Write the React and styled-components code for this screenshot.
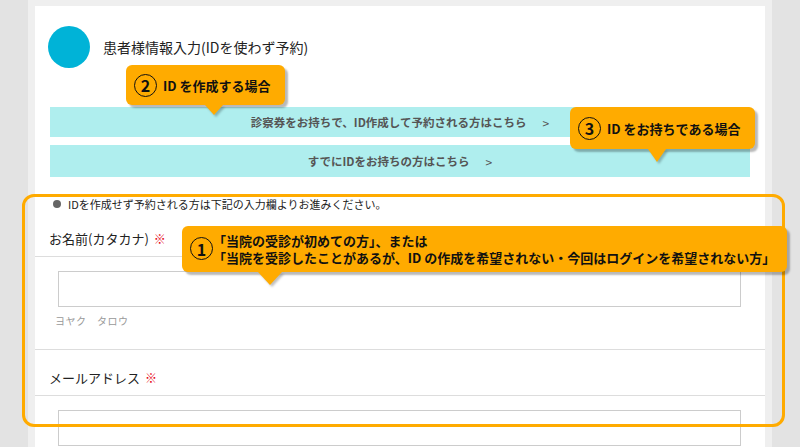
import styled, { createGlobalStyle } from "styled-components";

const GlobalStyle = createGlobalStyle`
  html, body {
    margin: 0;
    padding: 0;
    background: #e3e3e3;
    font-family: "Noto Sans CJK JP", "Noto Sans", sans-serif;
    color: #333;
    overflow: hidden;
  }
`;

const Page = styled.div`
  position: relative;
  margin: 0 28px;
  padding: 6px 7px 0;
  background: #efefef;
  height: 441px;
`;

const Panel = styled.div`
  background: #fff;
  height: 100%;
  padding-top: 20px;
  box-sizing: border-box;
  overflow: hidden;
`;

const Header = styled.div`
  display: flex;
  align-items: center;
  gap: 13px;
  padding-left: 13px;
`;

const Dot = styled.div`
  width: 42px;
  height: 42px;
  border-radius: 50%;
  background: #00b3d7;
`;

const Title = styled.h1`
  margin: 0;
  font-size: 14px;
  font-weight: normal;
  color: #222;
`;

const Links = styled.div`
  display: flex;
  flex-direction: column;
  gap: 8px;
  margin: 39px 15px 0;
`;

const LinkBar = styled.a`
  display: flex;
  align-items: center;
  justify-content: center;
  height: ${(p) => p.$h}px;
  background: #afeeee;
  color: #555;
  font-size: 11.5px;
  font-weight: bold;
  text-decoration: none;

  span {
    margin-left: 16px;
    font-weight: normal;
    font-size: 12px;
  }
`;

const Notice = styled.p`
  display: flex;
  align-items: center;
  gap: 7px;
  margin: 20px 0 0 18px;
  font-size: 11px;
  line-height: 14px;
  color: #222;

  &::before {
    content: "";
    width: 8px;
    height: 8px;
    border-radius: 50%;
    background: #666;
  }
`;

const FieldLabel = styled.div`
  padding: 18px 14px 7px;
  font-size: 13px;
  line-height: 20px;
  color: #222;
  border-bottom: 1px solid #ddd;

  em {
    font-style: normal;
    color: #e60012;
    font-size: 12px;
    margin-left: 5px;
  }
`;

const FieldBody = styled.div`
  padding: 14px 24px 20px 23px;
  border-bottom: ${(p) => (p.$last ? "none" : "1px solid #ddd")};
`;

const Input = styled.input`
  display: block;
  width: 100%;
  height: 36px;
  box-sizing: border-box;
  border: 1px solid #ccc;
  background: #fff;
`;

const Hint = styled.div`
  margin: 6px 0 0 -3px;
  font-size: 10px;
  line-height: 16px;
  color: #999;
  letter-spacing: 0.5px;
`;

const Frame = styled.div`
  position: absolute;
  left: -6px;
  top: 194px;
  width: 763px;
  height: 233px;
  box-sizing: border-box;
  border: 3px solid #ffab00;
  border-radius: 12px;
  pointer-events: none;
`;

const Callout = styled.div`
  position: absolute;
  left: ${(p) => p.$x}px;
  top: ${(p) => p.$y}px;
  width: ${(p) => p.$w}px;
  height: ${(p) => p.$h}px;
  box-sizing: border-box;
  display: flex;
  align-items: ${(p) => (p.$top ? "flex-start" : "center")};
  gap: ${(p) => (p.$top ? 0 : 6)}px;
  padding: ${(p) => (p.$top ? "6px 8px" : "0 8px")};
  background: #ffab00;
  border-radius: 6px;
  box-shadow: 3px 3px 2px rgba(0, 0, 0, 0.28);
  color: #111;
  font-size: 13px;
  font-weight: bold;
  line-height: 17px;

  &::after {
    content: "";
    position: absolute;
    left: ${(p) => p.$tip}px;
    top: 100%;
    border-left: ${(p) => p.$tw}px solid transparent;
    border-right: ${(p) => p.$tw}px solid transparent;
    border-top: ${(p) => p.$th}px solid #ffab00;
    filter: drop-shadow(2px 2px 1px rgba(0, 0, 0, 0.25));
  }
`;

const Num = styled.span`
  flex: none;
  display: inline-flex;
  align-items: center;
  justify-content: center;
  width: 21px;
  height: 21px;
  border: 1.5px solid #111;
  border-radius: 50%;
  font-size: 16px;
  font-weight: bold;
  line-height: 1;
  margin-top: ${(p) => p.$mt || 0}px;
`;

const Lines = styled.div`
  display: flex;
  flex-direction: column;
`;

export default function App() {
  return (
    <>
      <GlobalStyle />
      <Page>
        <Panel>
          <Header>
            <Dot />
            <Title>患者様情報入力(IDを使わず予約)</Title>
          </Header>
          <Links>
            <LinkBar href="#" $h={30}>
              診察券をお持ちで、ID作成して予約される方はこちら<span>&gt;</span>
            </LinkBar>
            <LinkBar href="#" $h={32}>
              すでにIDをお持ちの方はこちら<span>&gt;</span>
            </LinkBar>
          </Links>
          <Notice>IDを作成せず予約される方は下記の入力欄よりお進みください。</Notice>
          <FieldLabel>
            お名前(カタカナ)<em>※</em>
          </FieldLabel>
          <FieldBody>
            <Input />
            <Hint>ヨヤク　タロウ</Hint>
          </FieldBody>
          <FieldLabel>
            メールアドレス<em>※</em>
          </FieldLabel>
          <FieldBody $last>
            <Input />
          </FieldBody>
        </Panel>
        <Frame />
        <Callout $x={98} $y={65} $w={159} $h={40} $tip={79} $tw={9} $th={10}>
          <Num>2</Num>
          ID を作成する場合
        </Callout>
        <Callout $x={542} $y={107} $w={185} $h={42} $tip={78} $tw={9} $th={13}>
          <Num>3</Num>
          ID をお持ちである場合
        </Callout>
        <Callout $x={154} $y={226} $w={605} $h={46} $tip={76} $tw={12} $th={13} $top>
          <Num $mt={5}>1</Num>
          <Lines>
            <span>「当院の受診が初めての方」、または</span>
            <span>「当院を受診したことがあるが、ID の作成を希望されない・今回はログインを希望されない方」</span>
          </Lines>
        </Callout>
      </Page>
    </>
  );
}
